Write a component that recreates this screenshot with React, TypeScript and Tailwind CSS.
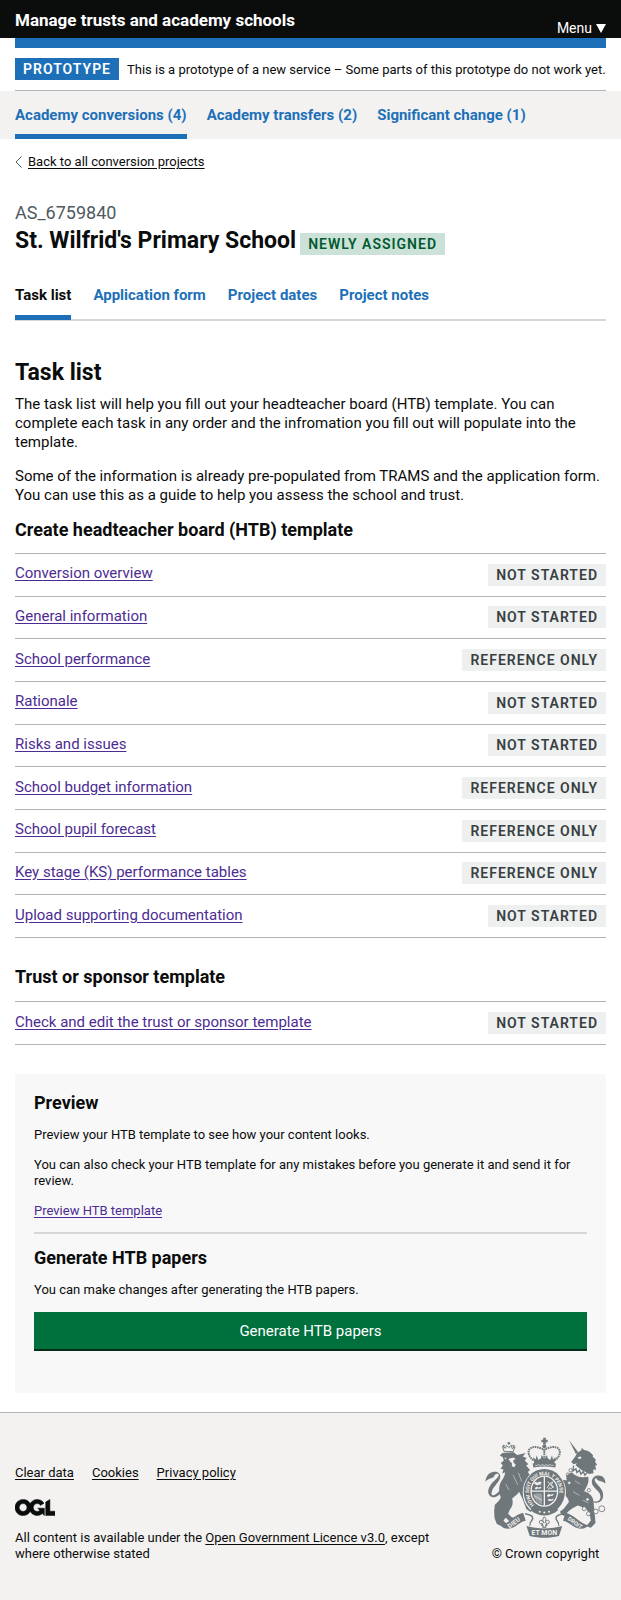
import type { ReactNode } from 'react';

type Status = 'Not started' | 'Reference only';

const tasks: { name: string; status: Status }[] = [
  { name: 'Conversion overview', status: 'Not started' },
  { name: 'General information', status: 'Not started' },
  { name: 'School performance', status: 'Reference only' },
  { name: 'Rationale', status: 'Not started' },
  { name: 'Risks and issues', status: 'Not started' },
  { name: 'School budget information', status: 'Reference only' },
  { name: 'School pupil forecast', status: 'Reference only' },
  { name: 'Key stage (KS) performance tables', status: 'Reference only' },
  { name: 'Upload supporting documentation', status: 'Not started' },
];

function Tag({ tone, children }: { tone: string; children: ReactNode }) {
  return (
    <strong className={`shrink-0 px-2 text-[14px] leading-[22px] font-semibold tracking-[1px] uppercase ${tone}`}>
      {children}
    </strong>
  );
}

function TaskRow({ name, status }: { name: string; status: Status }) {
  return (
    <li className="flex items-center justify-between gap-4 border-b border-[#b1b4b6]">
      <a href="#" className="pb-[3px] text-[15px] leading-5 text-[#4c2c92] underline underline-offset-2">
        {name}
      </a>
      <Tag tone="bg-[#eeefef] text-[#383f43]">{status}</Tag>
    </li>
  );
}

function Lion() {
  return (
    <g>
      <path d="M66 46l5 16h27l6-15-9 6-2-10-8 7-7-7-3 9z" fill="none" stroke="#6f777b" strokeWidth="3" />
      <circle cx="85" cy="37" r="4" />
      <circle cx="70" cy="44" r="3" />
      <circle cx="99" cy="44" r="3" />
      <path d="M66 66l34-2 10 8 26-6-9 11 12 4-6 8 11 11-7 4 12 13-7 6 6 8c-9 14-13 30-12 46l6 22 18 38-10 7-12-9-12-32-10-20c-6 10-14 14-21 20 4 13 1 24-7 34l-5 12 10 10 14 5-3 9-19-3-9-9-7 8 11 12-13 7-18-8-7-18-1-22 2-18c8-8 14-14 18-22-6-14-7-28-2-42 6-12 14-20 15-34l-9 4 4-13-9-1 7-10-6-8 9-7-3-10-9-5z" />
      <path d="M84 84l14-4 8 4-8 4 2 8 6 5-4 8-8-3 1-8-6-6z" fill="#f3f2f1" />
      <path d="M72 80l7 2-5 3z" fill="#f3f2f1" />
      <path d="M62 184c-10 16-26 20-35 10-11-16 3-34 16-46 12-11 14-17 10-19-6-2-10 2-13 8-4 8-14 2-25 16 0-16 10-28 22-30 14-3 25 4 22 18-4 16-24 28-26 46-1 12 13 6 25-9z" />
      <path d="M76 160l10 18M98 132l14 30M114 126l10 26" stroke="#f3f2f1" strokeWidth="1.5" />
    </g>
  );
}

function Unicorn() {
  return (
    <g>
      <path d="M266 27l28 37-7 5z" />
      <path d="M291 66l12-8 2-8 6 7c12 1 22 7 28 17l-2 2 11 12-4 2 7 13-6 1 3 13-9-2 1 12-14 2-10-6-12-6-18-14 4-6-10 3-7-7 13-18z" />
      <path d="M292 79l10-2 2 5-8 2z" fill="#f3f2f1" />
      <path d="M280 104l-2 16 9-6 3 11 8-7 4 12 7-8 5 11 6-7" fill="none" stroke="#6f777b" strokeWidth="4" />
      <path d="M274 124c16 16 32 16 50 14 4 20-6 32-12 43 18 6 28 18 28 33l3 27 3 36-14 14-14-4 14-18-4-20-11-16-24-9-15 8c-10 8-18 12-26 24l-8-4-5-9 12-10 15-19c-2-14-11-18-16-29l-9-4-13-13-10 7-8-4 9-16-10-6-7-2 2-7 12 4 10 9 9 3 9-10 15 3-1-14z" />
      <path d="M332 208c16 10 30 2 29-12-1-16-24-24-26-40-1-14 8-22 20-22 14 0 21 10 21 24-9-8-20-6-25-12-5-7-8-3-7 3 2 11 25 22 25 43 1 25-24 30-37 16z" />
      <path d="M284 150l16 10M278 182l20 12M308 208l16 8" stroke="#f3f2f1" strokeWidth="1.5" />
      <g fill="none" stroke="#6f777b" strokeWidth="2.5">
        <circle cx="271" cy="118" r="5" />
        <circle cx="263" cy="131" r="5" />
        <circle cx="267" cy="156" r="5" fill="#f3f2f1" />
        <circle cx="326" cy="178" r="5" fill="#f3f2f1" />
        <circle cx="322" cy="206" r="5" fill="#f3f2f1" />
        <circle cx="312" cy="234" r="6" fill="#f3f2f1" />
        <circle cx="325" cy="249" r="6" fill="#f3f2f1" />
        <circle cx="347" cy="242" r="7" fill="#f3f2f1" />
        <circle cx="365" cy="234" r="9" />
      </g>
    </g>
  );
}

function Crown() {
  return (
    <g>
      <path d="M188 20h9l-1 6h6v8h-6l1 6h-9l1-6h-6v-8h6z" />
      <circle cx="192" cy="46" r="6" />
      <path
        d="M159 88c-14-10-19-27-10-35 12-10 30-3 42 4 13-7 32-14 43-4 9 9 4 25-10 35"
        fill="none"
        stroke="#6f777b"
        strokeWidth="6"
        strokeDasharray="5 2"
      />
      <path d="M192 54v34" stroke="#6f777b" strokeWidth="6" strokeDasharray="5 2" />
      <path d="M158 78l8 8 3-13 5 14 8-5 2-10 8 12 8-12 2 10 8 5 5-14 3 13 8-8-4 21h-60z" />
      <path d="M157 98c22-5 48-5 70 0l-2 12c-21-4-45-4-66 0z" />
      <path d="M164 103l6 1 5-3 5 3 6-3 6 3 6-3 5 3 6-3 5 3 6-1" fill="none" stroke="#f3f2f1" strokeWidth="2" />
    </g>
  );
}

function Shield() {
  return (
    <g>
      <ellipse cx="192" cy="184" rx="65" ry="71" fill="#f3f2f1" />
      <ellipse cx="192" cy="182" rx="62" ry="68" />
      <ellipse cx="192" cy="181" rx="42" ry="47" fill="#f3f2f1" />
      <ellipse cx="192" cy="181" rx="38" ry="43" fill="#6f777b" />
      <path id="garter" d="M162 222A46 51 0 1 1 222 222" fill="none" />
      <text fill="#f3f2f1" fontSize="15" fontWeight="700" className="font-['Roboto',sans-serif]">
        <textPath href="#garter">HONI SOIT QUI MAL Y PENSE</textPath>
      </text>
      <path d="M192 137v88M152 181h80" stroke="#f3f2f1" strokeWidth="4" />
      <path
        d="M160 158l6-5 5 3 6-4 8 3-5 4 4 3-9-1-4 3zM163 172l5-4 6 2 10-2-4 6-8-1-5 3zM200 194l5-5 6 3 10-3-4 6-9 1-5 3zM201 208l6-4 5 2 9-3-5 7-8 1z"
        fill="#f3f2f1"
      />
      <path d="M202 152l18 20M200 172l9-15 8-4-4 10 7 4-7 6-6-2-3 6" fill="none" stroke="#f3f2f1" strokeWidth="2.5" />
      <path d="M164 189v16M170 188v24M176 188v29M182 188v32M160 194l25 14" stroke="#f3f2f1" strokeWidth="2" />
      <path d="M158 228c20 14 48 14 68 0l8 10c-24 22-60 22-84 0z" />
      <circle cx="178" cy="243" r="3" fill="#f3f2f1" />
      <circle cx="192" cy="245" r="3" fill="#f3f2f1" />
      <circle cx="206" cy="243" r="3" fill="#f3f2f1" />
    </g>
  );
}

function Ribbon() {
  return (
    <g>
      <path d="M60 284c26-6 42-32 68-38l8 24c-22 4-32 24-54 24-10 0-16-4-22-10z" />
      <path d="M324 284c-26-6-42-32-68-38l-8 24c22 4 32 24 54 24 10 0 16-4 22-10z" />
      <path
        d="M134 249c18 3 24 7 23 14-1 8-11 12-8 22M250 249c-18 3-24 7-23 14 1 8 11 12 8 22"
        fill="none"
        stroke="#6f777b"
        strokeWidth="4"
      />
      <path d="M138 286c34 10 74 10 108 0l-10 30c-28 7-60 7-88 0z" />
      <g fill="#f3f2f1" fontWeight="700" textAnchor="middle" className="font-['Roboto',sans-serif]">
        <text transform="translate(104 281) rotate(-36)" fontSize="19">
          DIEU
        </text>
        <text transform="translate(281 281) rotate(36)" fontSize="17">
          DROIT
        </text>
        <text x="192" y="313" fontSize="21">
          ET MON
        </text>
      </g>
      <path
        d="M192 258c6 6 6 12 2 18 4-10 13-9 13-2 0 6-6 6-8 3l-3 4h4v4h-5l2 5h-10l2-5h-5v-4h4l-3-4c-2 3-8 3-8-3 0-7 9-8 13 2-4-6-4-12 2-18z"
        fill="none"
        stroke="#6f777b"
        strokeWidth="3"
      />
    </g>
  );
}

function RoyalCrest() {
  return (
    <svg viewBox="14 18 363 304" fill="#6f777b" aria-hidden="true" className="h-[101px] w-[121px]">
      <Lion />
      <Unicorn />
      <Crown />
      <Shield />
      <Ribbon />
    </svg>
  );
}

function OglLogo() {
  return (
    <svg viewBox="0 0 483.2 195.7" fill="currentColor" aria-hidden="true" className="mt-[18px] h-[17px] w-[40px]">
      <path
        d="M421.5 142.8V.1l-50.7 32.3v161.1h112.4v-50.7zm-122.3-9.6A47.12 47.12 0 0 1 221 97.8c0-26 21.1-47.1 47.1-47.1 16.7 0 31.4 8.7 39.7 21.8l42.7-27.2A97.63 97.63 0 0 0 268.1 0c-36.5 0-68.3 20.1-85.1 49.7A98 98 0 0 0 97.8 0C43.9 0 0 43.9 0 97.8s43.9 97.8 97.8 97.8c36.5 0 68.3-20.1 85.1-49.7a97.76 97.76 0 0 0 149.6 25.4l19.4 22.2h3v-87.8h-80l24.3 27.5zM97.8 145c-26 0-47.1-21.1-47.1-47.1s21.1-47.1 47.1-47.1 47.1 21.1 47.1 47.1S123.8 145 97.8 145"
        stroke="currentColor"
        strokeWidth="6"
      />
    </svg>
  );
}

export default function App() {
  return (
    <div className="bg-white font-['Roboto',sans-serif] text-[15px] leading-[19px] text-[#0b0c0c]">
      <header>
        <div className="flex justify-between bg-[#0b0c0c] px-[15px] text-white">
          <a href="#" className="pt-[10px] pb-2 text-[17px] leading-5 font-bold">
            Manage trusts and academy schools
          </a>
          <button type="button" className="flex items-center gap-1 self-end text-[14px] leading-5">
            Menu
            <svg viewBox="0 0 10 9" fill="currentColor" aria-hidden="true" className="h-[9px] w-[10px]">
              <path d="M0 0h10L5 9z" />
            </svg>
          </button>
        </div>
        <div className="mx-[15px] h-[10px] bg-[#1d70b8]" />
        <div className="mx-[15px] flex items-center gap-2 border-b border-[#b1b4b6] py-[10px]">
          <Tag tone="bg-[#1d70b8] text-white">Prototype</Tag>
          <span className="pt-px text-[13px] leading-4">
            This is a prototype of a new service – Some parts of this prototype do not work yet.
          </span>
        </div>
        <nav aria-label="Services" className="bg-[#f3f2f1] px-[15px]">
          <ul className="flex gap-5 font-bold leading-5 text-[#1d70b8]">
            <li className="border-b-[5px] border-[#1d70b8] pt-[14px] pb-[9px]">
              <a href="#">Academy conversions (4)</a>
            </li>
            <li className="pt-[14px]">
              <a href="#">Academy transfers (2)</a>
            </li>
            <li className="pt-[14px]">
              <a href="#">Significant change (1)</a>
            </li>
          </ul>
        </nav>
      </header>

      <main className="px-[15px]">
        <a href="#" className="mt-[15px] flex w-fit items-center gap-[6px] text-[13px] leading-4">
          <svg viewBox="0 0 7 12" fill="none" stroke="#505a5f" aria-hidden="true" className="h-3 w-[7px]">
            <path d="M6.500 .5L1 6l5.500 5.500" />
          </svg>
          <span className="underline underline-offset-2">Back to all conversion projects</span>
        </a>

        <p className="mt-[31px] text-[18px] leading-6 text-[#505a5f]">AS_6759840</p>
        <div className="mt-0.5 flex items-end gap-1">
          <h1 className="text-[23px] leading-7 font-bold">St. Wilfrid's Primary School</h1>
          <Tag tone="bg-[#cce2d8] text-[#005a30]">Newly assigned</Tag>
        </div>

        <nav aria-label="Project" className="mt-[30px] border-b-2 border-[#d5d7d8]">
          <ul className="-mb-px flex gap-[22px] font-bold leading-5 text-[#1d70b8]">
            <li className="border-b-[5px] border-[#1d70b8] pb-[10px] text-[#0b0c0c]">
              <a href="#" aria-current="page">Task list</a>
            </li>
            <li>
              <a href="#">Application form</a>
            </li>
            <li>
              <a href="#">Project dates</a>
            </li>
            <li>
              <a href="#">Project notes</a>
            </li>
          </ul>
        </nav>

        <h2 className="mt-[38px] text-[23px] leading-7 font-bold">Task list</h2>
        <p className="mt-2">
          The task list will help you fill out your headteacher board (HTB) template. You can complete each task in any
          order and the infromation you fill out will populate into the template.
        </p>
        <p className="mt-[15px]">
          Some of the information is already pre-populated from TRAMS and the application form. You can use this as a
          guide to help you assess the school and trust.
        </p>

        <h3 className="mt-[14px] text-[18px] leading-[22px] font-bold">Create headteacher board (HTB) template</h3>
        <ul className="mt-3 grid min-h-[385px] auto-rows-fr border-t border-[#b1b4b6]">
          {tasks.map((task) => (
            <TaskRow key={task.name} name={task.name} status={task.status} />
          ))}
        </ul>

        <h3 className="mt-[28px] text-[18px] leading-[22px] font-bold">Trust or sponsor template</h3>
        <ul className="mt-[13px] grid min-h-[44px] border-t border-[#b1b4b6]">
          <TaskRow name="Check and edit the trust or sponsor template" status="Not started" />
        </ul>

        <section className="mt-[29px] bg-[#f8f8f8] px-[19px] pt-[18px] pb-[42px] text-[13px] leading-4">
          <h3 className="text-[18px] leading-[22px] font-bold">Preview</h3>
          <p className="mt-[13px]">Preview your HTB template to see how your content looks.</p>
          <p className="mt-[14px]">
            You can also check your HTB template for any mistakes before you generate it and send it for review.
          </p>
          <p className="mt-[14px]">
            <a href="#" className="text-[#4c2c92] underline underline-offset-2">
              Preview HTB template
            </a>
          </p>
          <hr className="mt-[13px] border-t-2 border-[#d5d7d8]" />
          <h3 className="mt-[13px] text-[18px] leading-[22px] font-bold">Generate HTB papers</h3>
          <p className="mt-[13px]">You can make changes after generating the HTB papers.</p>
          <button
            type="button"
            className="mt-[14px] w-full border-b-2 border-[#002d18] bg-[#00703c] pt-[9px] pb-2 text-[15px] leading-5 text-white"
          >
            Generate HTB papers
          </button>
        </section>
      </main>

      <footer className="mt-[19px] flex items-end justify-between gap-8 border-t border-[#b1b4b6] bg-[#f3f2f1] px-[15px] pt-6 pb-[38px] text-[13px] leading-4">
        <div className="flex-1">
          <ul className="flex gap-[18px]">
            <li>
              <a href="#" className="underline underline-offset-2">Clear data</a>
            </li>
            <li>
              <a href="#" className="underline underline-offset-2">Cookies</a>
            </li>
            <li>
              <a href="#" className="underline underline-offset-2">Privacy policy</a>
            </li>
          </ul>
          <OglLogo />
          <p className="mt-[14px]">
            All content is available under the{' '}
            <a href="#" className="underline underline-offset-2">Open Government Licence v3.0</a>, except where otherwise
            stated
          </p>
        </div>
        <a href="#" className="flex flex-col items-center gap-2">
          <RoyalCrest />
          <span>© Crown copyright</span>
        </a>
      </footer>
    </div>
  );
}
